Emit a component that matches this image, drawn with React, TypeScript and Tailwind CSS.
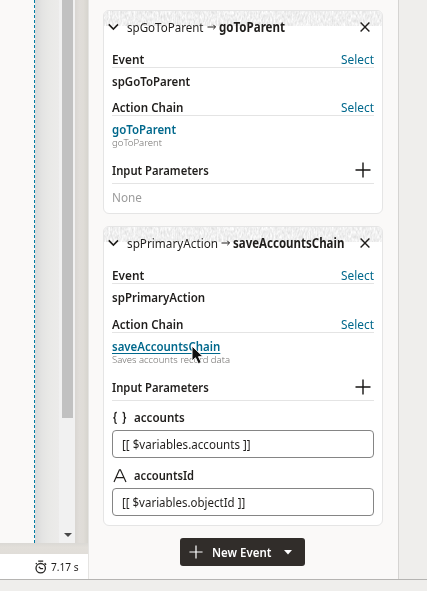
import React, { useLayoutEffect, useRef, useState } from "react";

// Text fitted horizontally to the given advance width.
function Fit({ w, className = "", leading = "leading-[18px]", children }: { w: number; className?: string; leading?: string; children: string }) {
  const ref = useRef<HTMLSpanElement>(null);
  const [scale, setScale] = useState(1);
  useLayoutEffect(() => {
    if (ref.current) setScale(w / ref.current.offsetWidth);
  }, [w, children]);
  return (
    <span className="block shrink-0" style={{ width: w }}>
      <span
        ref={ref}
        className={`block w-max origin-left whitespace-pre ${leading} ${className}`}
        style={{ transform: `scaleX(${scale})` }}
      >
        {children}
      </span>
    </span>
  );
}

function Plus({ className }: { className: string }) {
  return (
    <svg viewBox="0 0 16 16" className={className} fill="none" stroke="currentColor" strokeWidth="1.4">
      <path d="M8 0.5v15M0.5 8h15" />
    </svg>
  );
}

function Texture({ id }: { id: string }) {
  return (
    <svg className="absolute inset-x-0 top-0 h-[15px] w-full" aria-hidden="true">
      <filter id={id} x="0" y="0" width="100%" height="100%" colorInterpolationFilters="sRGB">
        <feTurbulence type="fractalNoise" baseFrequency="0.6 0.25" numOctaves="2" seed="4" />
        <feColorMatrix values="0.2 0 0 0 0.84  0.2 0 0 0 0.84  0.2 0 0 0 0.84  0 0 0 0 1" />
      </filter>
      <rect width="100%" height="15" filter={`url(#${id})`} />
    </svg>
  );
}

function Header({ id, event, eventW, chain, chainW, pad }: { id: string; event: string; eventW: number; chain: string; chainW: number; pad: string }) {
  return (
    <div className="relative flex h-8 items-center overflow-hidden rounded-t-[5px]">
      <Texture id={id} />
      <div className="relative flex w-full items-center pl-[4px] pr-[12px]">
        <svg viewBox="0 0 12 8" className="mr-[7px] h-2 w-3 shrink-0" fill="none" stroke="currentColor" strokeWidth="1.6">
          <path d="M.8 1.4 5.4 6l4.6-4.6" />
        </svg>
        <div className={`flex items-center ${pad}`}>
          <Fit w={eventW}>{event}</Fit>
          <svg viewBox="0 0 10 8" className="ml-[3px] mr-[2px] h-2 w-[10px] shrink-0" fill="none" stroke="currentColor" strokeWidth="1">
            <path d="M.5 4h8M6.3 1.8 8.5 4 6.3 6.2" />
          </svg>
          <Fit w={chainW} className="font-bold">{chain}</Fit>
        </div>
        <svg viewBox="0 0 10 10" className="ml-auto h-[10px] w-[10px] shrink-0" fill="none" stroke="currentColor" strokeWidth="1.4">
          <path d="m.6.6 8.8 8.8M9.4.6.6 9.4" />
        </svg>
      </div>
    </div>
  );
}

function SelectRow({ label, w }: { label: string; w: number }) {
  return (
    <div className="flex h-[17px] items-center justify-between border-b border-[#e4e4e4]">
      <Fit w={w} className="font-semibold">{label}</Fit>
      <Fit w={33} className="text-[#00688c]">Select</Fit>
    </div>
  );
}

function ParamsRow() {
  return (
    <div className="flex h-[27px] items-center justify-between border-b border-[#e4e4e4] pr-[3px]">
      <Fit w={96.5} className="font-semibold">Input Parameters</Fit>
      <Plus className="h-4 w-4 text-[#161513]" />
    </div>
  );
}

function Field({ value, w }: { value: string; w: number }) {
  return (
    <div className="ml-[0.5px] flex h-7 w-[262px] items-center rounded-[4px] border border-[#858585] bg-white pl-[8.5px]">
      <Fit w={w}>{value}</Fit>
    </div>
  );
}

export default function App() {
  return (
    <div className="flex h-[591px] w-[427px] flex-col overflow-hidden bg-[#efeeec] font-['Noto_Sans','Open_Sans',sans-serif] text-[13.3px] text-[#201e1c]">
      <div className="flex h-[579px]">
        <div className="flex w-[88px] shrink-0 flex-col bg-[#e1deda]">
          <div className="flex h-[543px] w-[88px]">
            <div className="w-[34px] shrink-0 bg-[#faf9f8]" />
            <div className="w-px shrink-0 bg-[repeating-linear-gradient(to_bottom,#007ba2_0px,#007ba2_3px,#faf9f8_3px,#faf9f8_5px)]" />
            <div className="w-6 shrink-0 bg-[linear-gradient(to_right,#d9d9d9,#e4e4e3_30%,#e9e9e7_60%,#ecebea)]" />
            <div className="flex w-4 shrink-0 flex-col items-center justify-between bg-[#f1f1f1]">
              <div className="ml-[1px] h-[418px] w-[11px] bg-[#c1c1c1]" />
              <svg viewBox="0 0 8 4" className="mb-[6px] ml-[1px] h-1 w-2" fill="#484848"><path d="M0 0h8L4 4z" /></svg>
            </div>
            <div className="w-[13px] shrink-0 bg-[linear-gradient(to_right,#d9d6d2,#e0ddd9_35%,#dfdcd7_65%,#d6d4ce)]" />
          </div>
          <div className="h-[11px] w-[88px] bg-[linear-gradient(to_bottom,#dad8d4,#e2dfda_40%,#e0ddd8)]" />
          <div className="flex h-[25px] w-[88px] items-center bg-white pl-[35px]">
            <svg viewBox="0 0 12 14" className="mr-1 h-[14px] w-3" fill="none" stroke="#242321" strokeWidth="1.3">
              <circle cx="5.7" cy="8.2" r="4.7" />
              <path d="M3.2 1.2h5M3.8 6.7 5.7 8.6h2.4M9.6 3.3l1.5 1.5M.8 4.1l1-1" />
            </svg>
            <Fit w={28} className="text-[10.5px]">7.17 s</Fit>
          </div>
        </div>

        <div className="flex w-[311px] flex-col border-x border-l-[#e5e4e2] border-r-[#d5d4d2] bg-[#faf9f8] pl-[14px] pt-[10px]">
          <section className="h-[204px] w-[280px] rounded-[6px] border border-[#e5e5e5] bg-white">
            <Header id="grain-a" event="spGoToParent" eventW={76.5} chain="goToParent" chainW={66} pad="pb-px" />
            <div className="pl-[7.5px] pr-[8px] pt-2">
              <SelectRow label="Event" w={32} />
              <div className="flex h-[27px] items-center pb-[2px]"><Fit w={78.5} className="font-semibold">spGoToParent</Fit></div>
              <div className="h-1" />
              <SelectRow label="Action Chain" w={71.5} />
              <div className="mt-[5px] flex h-[16px] items-center"><Fit w={64.5} leading="leading-[16px]" className="font-semibold text-[#00688c]">goToParent</Fit></div>
              <div className="flex h-[11px] items-center"><Fit w={50} leading="leading-[11px]" className="text-[9.2px] font-light text-[#73716f]">goToParent</Fit></div>
              <div className="h-[9px]" />
              <ParamsRow />
              <div className="flex h-[27px] items-center pb-[2px]"><Fit w={30} className="text-[#9b9b9b]">None</Fit></div>
            </div>
          </section>

          <section className="mt-[12px] h-[300px] w-[280px] rounded-[6px] border border-[#e5e5e5] bg-white">
            <Header id="grain-b" event="spPrimaryAction" eventW={91} chain="saveAccountsChain" chainW={111.5} pad="pb-0" />
            <div className="pl-[7.5px] pr-[8px] pt-2">
              <SelectRow label="Event" w={32} />
              <div className="flex h-[27px] items-center pb-[2px]"><Fit w={93.5} className="font-semibold">spPrimaryAction</Fit></div>
              <div className="h-[5px]" />
              <SelectRow label="Action Chain" w={71.5} />
              <div className="relative mt-[5px] flex h-[16px] items-center">
                <Fit w={108.5} leading="leading-[16px]" className="font-semibold text-[#00688c] underline underline-offset-2">saveAccountsChain</Fit>
                <svg viewBox="0 0 14 20" className="absolute left-[79px] top-[7px] z-10 h-5 w-[14px]" fill="#111" stroke="#fff" strokeWidth="1">
                  <path d="M1 1v15l3.5-3.2 2.8 6 3-1.4-2.8-5.7h4.7z" />
                </svg>
              </div>
              <div className="flex h-[11px] items-center"><Fit w={118} leading="leading-[11px]" className="text-[9.2px] font-light text-[#73716f]">Saves accounts record data</Fit></div>
              <div className="h-[9px]" />
              <ParamsRow />
              <div className="flex h-[29px] items-center pt-[5px]">
                <svg viewBox="0 0 16 14" className="mr-[6px] h-[14px] w-4" fill="none" stroke="currentColor" strokeWidth="1.3">
                  <path d="M4.8 1.5H4.3Q3 1.5 3 2.8V5.2Q3 6.9 1.3 6.9 3 6.9 3 8.6V11Q3 12.3 4.3 12.3h.5M10.6 1.5h.5q1.3 0 1.3 1.3v2.4q0 1.7 1.7 1.7-1.7 0-1.7 1.7V11q0 1.3-1.3 1.3h-.5" />
                </svg>
                <div className="pb-[2px]"><Fit w={50.5} className="font-semibold">accounts</Fit></div>
              </div>
              <Field value="[[ $variables.accounts ]]" w={129} />
              <div className="flex h-[30px] items-center pt-[6px]">
                <svg viewBox="0 0 14 14" className="ml-px mr-[7px] h-[14px] w-[14px]" fill="none" stroke="currentColor" strokeWidth="1.2">
                  <path d="M1 13 6.4.8h1L13 13M3.2 8.7h7.6" />
                </svg>
                <div className="pb-[2px]"><Fit w={60.5} className="font-semibold">accountsId</Fit></div>
              </div>
              <Field value="[[ $variables.objectId ]]" w={123.5} />
            </div>
          </section>

          <button className="ml-[77px] mt-[12px] flex h-7 w-[125px] items-center rounded-[3px] bg-[#312d2a] pl-[9px] text-white">
            <Plus className="mr-[9px] h-[14px] w-[14px]" />
            <Fit w={59.5} className="text-left font-semibold">New Event</Fit>
            <svg viewBox="0 0 8 5" className="ml-3 h-[5px] w-2" fill="currentColor"><path d="M0 0h8L4 4.6z" /></svg>
          </button>
        </div>
      </div>
      <div className="h-3 border-t border-[#b5b4b2]" />
    </div>
  );
}
